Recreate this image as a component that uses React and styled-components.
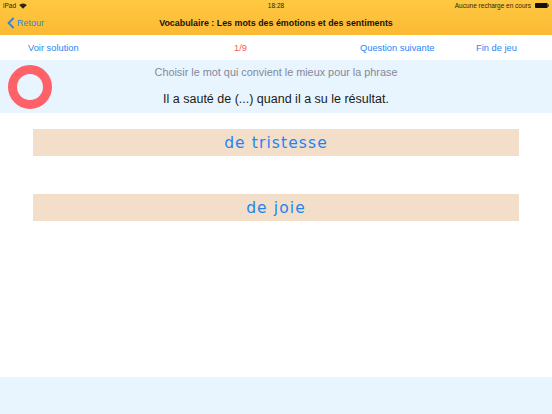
import React from "react";
import styled, { createGlobalStyle } from "styled-components";

const Global = createGlobalStyle`
  html, body { margin: 0; padding: 0; }
  body { font-family: "Liberation Sans", Arial, sans-serif; background: #fff; }
`;

const Page = styled.div`
  width: 552px;
  height: 414px;
  display: flex;
  flex-direction: column;
  overflow: hidden;
  background: #fff;
  position: relative;
`;

const Header = styled.header`
  height: 35px;
  flex: none;
  background: linear-gradient(#ffc840, #fbb934);
  display: flex;
  flex-direction: column;
`;

const StatusBar = styled.div`
  height: 11px;
  padding: 0 3px 0 3px;
  display: grid;
  grid-template-columns: 1fr auto 1fr;
  align-items: center;
  font-size: 6.5px;
  color: #2a2410;
`;

const StatusLeft = styled.div`
  display: flex;
  align-items: center;
  gap: 3px;
`;

const StatusRight = styled.div`
  display: flex;
  align-items: center;
  justify-content: flex-end;
  gap: 4px;
`;

const NavBar = styled.div`
  flex: 1;
  display: grid;
  grid-template-columns: 1fr auto 1fr;
  align-items: center;
  padding: 0 7px 1px 7px;
`;

const BackLink = styled.div`
  display: flex;
  align-items: center;
  gap: 2px;
  color: #2f84e8;
  font-size: 9px;
`;

const Title = styled.div`
  font-size: 8.9px;
  font-weight: bold;
  color: #1a1408;
`;

const Toolbar = styled.nav`
  height: 25px;
  flex: none;
  display: grid;
  grid-template-columns: 183px 143px 124px 1fr;
  align-items: center;
  font-size: 9.3px;
  color: #2b85f5;
`;

const ToolItem = styled.div`
  padding-left: ${(p) => p.$left || 0}px;
  color: ${(p) => p.$color || "inherit"};
`;

const Question = styled.section`
  height: 53px;
  flex: none;
  background: #e8f5fe;
  position: relative;
  display: flex;
  flex-direction: column;
  align-items: center;
`;

const Hint = styled.div`
  margin-top: 6px;
  font-size: 10.85px;
  line-height: 13px;
  color: #84889a;
`;

const Sentence = styled.div`
  margin-top: 13px;
  font-size: 12.5px;
  line-height: 15px;
  color: #1a1a1a;
`;

const Ring = styled.div`
  position: absolute;
  left: 8px;
  top: 5px;
  width: 44px;
  height: 44px;
  box-sizing: border-box;
  border-radius: 50%;
  border: 9.5px solid #fe6268;
  background: #e8f5fe;
`;

const Answers = styled.main`
  flex: 1;
  padding: 16px 33px 0;
  display: flex;
  flex-direction: column;
  gap: 38px;
`;

const Answer = styled.div`
  height: 27px;
  padding-top: 1px;
  box-sizing: border-box;
  background: #f3dfc9;
  display: flex;
  align-items: center;
  justify-content: center;
  font-family: "DejaVu Sans", sans-serif;
  font-size: 15.5px;
  letter-spacing: 1.1px;
  color: #1f84f4;
`;

const Footer = styled.footer`
  height: 37px;
  flex: none;
  background: #e8f5fe;
`;

const Wifi = () => (
  <svg width="8" height="6" viewBox="0 0 8 6" aria-hidden="true">
    <path d="M4 5.8 L0.2 2 A5.4 5.4 0 0 1 7.8 2 Z" fill="#2a2410" />
  </svg>
);

const Battery = () => (
  <svg width="14" height="5" viewBox="0 0 14 5" aria-hidden="true">
    <rect x="0" y="0" width="12.6" height="5" rx="0.8" fill="#111" />
    <rect x="12.8" y="1.5" width="1" height="2" fill="#111" />
  </svg>
);

const Chevron = () => (
  <svg width="8" height="12" viewBox="0 0 8 12" aria-hidden="true">
    <path d="M6.6 1 L1.6 6 L6.6 11" fill="none" stroke="#2f84e8" strokeWidth="1.9" />
  </svg>
);

export default function App() {
  return (
    <Page>
      <Global />
      <Header>
        <StatusBar>
          <StatusLeft>iPad <Wifi /></StatusLeft>
          <div>18:28</div>
          <StatusRight>Aucune recharge en cours <Battery /></StatusRight>
        </StatusBar>
        <NavBar>
          <BackLink><Chevron />Retour</BackLink>
          <Title>Vocabulaire : Les mots des émotions et des sentiments</Title>
          <div />
        </NavBar>
      </Header>
      <Toolbar>
        <ToolItem $left={28}>Voir solution</ToolItem>
        <ToolItem $left={51} $color="#fb5a50">1/9</ToolItem>
        <ToolItem $left={34}>Question suivante</ToolItem>
        <ToolItem $left={26}>Fin de jeu</ToolItem>
      </Toolbar>
      <Question>
        <Ring />
        <Hint>Choisir le mot qui convient le mieux pour la phrase</Hint>
        <Sentence>Il a sauté de (...) quand il a su le résultat.</Sentence>
      </Question>
      <Answers>
        <Answer>de tristesse</Answer>
        <Answer>de joie</Answer>
      </Answers>
      <Footer />
    </Page>
  );
}
